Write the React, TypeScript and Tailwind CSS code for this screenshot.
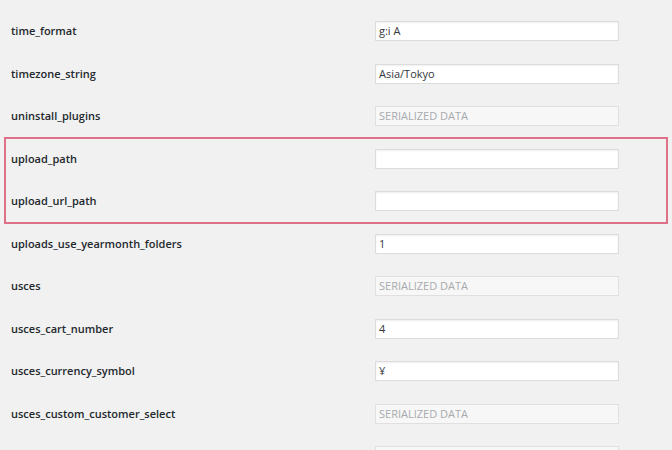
import React from "react";

interface OptionRow {
  name: string;
  value?: string;
  serialized?: boolean;
}

const before: OptionRow[] = [
  { name: "time_format", value: "g:i A" },
  { name: "timezone_string", value: "Asia/Tokyo" },
  { name: "uninstall_plugins", serialized: true },
];

const highlighted: OptionRow[] = [
  { name: "upload_path", value: "" },
  { name: "upload_url_path", value: "" },
];

const after: OptionRow[] = [
  { name: "uploads_use_yearmonth_folders", value: "1" },
  { name: "usces", serialized: true },
  { name: "usces_cart_number", value: "4" },
  { name: "usces_currency_symbol", value: "¥" },
  { name: "usces_custom_customer_select", serialized: true },
];

const Row: React.FC<{ row: OptionRow; inset?: boolean }> = ({ row, inset }) => (
  <div className="flex h-[42.5px] items-center">
    <div
      className={`${inset ? "w-[370px] pl-[6px]" : "w-[375px] pl-[11px]"} shrink-0 text-[11px] font-semibold text-[#23282d]`}
    >
      {row.name}
    </div>
    {row.serialized ? (
      <div className="flex h-[20px] w-[244px] items-center border border-[#e0e0e0] bg-[#f7f7f7] px-[3px] text-[11px] text-[#a7aaad]">
        SERIALIZED DATA
      </div>
    ) : (
      <div className="flex h-[20px] w-[244px] items-center border border-[#dcdcdc] bg-white px-[3px] text-[11px] text-[#32373c] shadow-[inset_0_1px_2px_rgba(0,0,0,0.07)]">
        {row.value}
      </div>
    )}
  </div>
);

export default function App() {
  return (
    <div
      className="h-[450px] w-[672px] overflow-hidden bg-[#f1f1f1] pt-[10px]"
      style={{ fontFamily: '"Open Sans", "Noto Sans CJK JP", sans-serif' }}
    >
      {before.map((r) => (
        <Row key={r.name} row={r} />
      ))}
      <div className="mx-[5px] outline-2 outline-offset-[-1px] outline-[#de7089]">
        {highlighted.map((r) => (
          <Row key={r.name} row={r} inset />
        ))}
      </div>
      {after.map((r) => (
        <Row key={r.name} row={r} />
      ))}
      {/* next row, only its input's top edge shows in the frame */}
      <div className="flex h-[42.5px] items-center">
        <div className="w-[375px] shrink-0" />
        <div className="h-[20px] w-[244px] border border-[#e0e0e0] bg-[#f7f7f7]" />
      </div>
    </div>
  );
}
